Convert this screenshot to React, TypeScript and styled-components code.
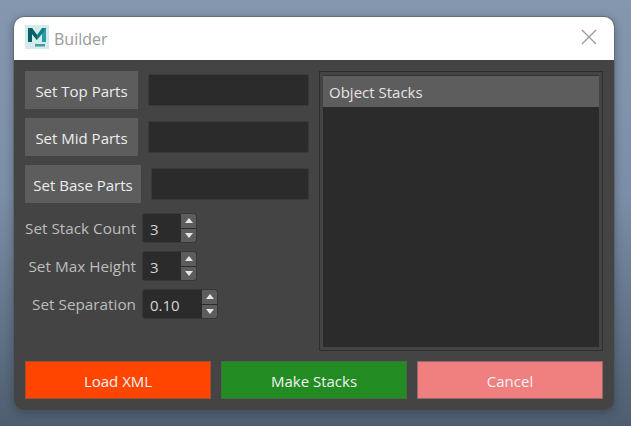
import React from 'react';
import styled, { createGlobalStyle } from 'styled-components';

const GlobalStyle = createGlobalStyle`
  html, body {
    margin: 0;
    height: 100%;
  }
  body {
    width: 631px;
    height: 426px;
    overflow: hidden;
    font-family: 'Open Sans', 'Noto Sans', 'Liberation Sans', sans-serif;
    background: linear-gradient(180deg, #8497af 0%, #7c8fa8 45%, #4e5d6f 100%);
  }
`;

const Desktop = styled.div`
  width: 631px;
  height: 426px;
  box-sizing: border-box;
  padding: 17px 17px 16px 14px;
`;

const Window = styled.div`
  width: 600px;
  height: 393px;
  box-sizing: border-box;
  display: flex;
  flex-direction: column;
  border-radius: 10px;
  overflow: hidden;
  box-shadow: 0 0 0 1px rgba(85, 85, 85, 0.45), 0 2px 10px rgba(30, 38, 50, 0.45);
`;

const TitleBar = styled.div`
  height: 43px;
  flex: none;
  box-sizing: border-box;
  background: #fff;
  display: flex;
  align-items: center;
  padding: 0 16px 3px 11px;
  gap: 5px;
`;

const TitleText = styled.span`
  font-size: 16px;
  color: #9a9a9a;
  flex: 1;
  margin-top: 3px;
`;

const CloseButton = styled.button`
  width: 18px;
  height: 18px;
  padding: 0;
  border: none;
  background: none;
  display: flex;
  color: #999;
`;

const Body = styled.div`
  flex: 1;
  background: #444;
  padding: 11px;
  display: flex;
  flex-direction: column;
  gap: 10px;
`;

const Columns = styled.div`
  display: flex;
  gap: 10px;
  height: 280px;
`;

const LeftColumn = styled.div`
  width: 284px;
  display: flex;
  flex-direction: column;
  gap: 9px;
`;

const PartRow = styled.div`
  display: flex;
  align-items: center;
  gap: 10px;
`;

const PartButton = styled.button`
  height: 38px;
  width: ${(props: { $w: number }) => props.$w}px;
  flex: none;
  padding: 2px 0 0;
  border: none;
  background: #5d5d5d;
  color: #eee;
  font: 15px 'Open Sans', sans-serif;
  white-space: nowrap;
`;

const PartField = styled.div`
  flex: 1;
  height: 32px;
  box-sizing: border-box;
  background: #2b2b2b;
  border: 1px solid #3a3a3a;
  border-radius: 2px;
`;

const SpinGroup = styled.div`
  display: flex;
  flex-direction: column;
  gap: 8px;
  margin-top: 1px;
`;

const SpinRow = styled.div`
  display: flex;
  align-items: center;
  height: 30px;
`;

const SpinLabel = styled.label`
  width: 111px;
  margin-right: 6px;
  text-align: right;
  font-size: 15.3px;
  color: #bdbdbd;
  white-space: nowrap;
`;

const SpinBox = styled.div`
  display: flex;
  height: 30px;
  box-sizing: border-box;
  background: #2b2b2b;
  border: 1px solid #383838;
  border-radius: 3px;
  overflow: hidden;
`;

const SpinValue = styled.span`
  width: ${(props: { $w: number }) => props.$w}px;
  box-sizing: border-box;
  padding-left: 7px;
  font-size: 15px;
  line-height: 30px;
  color: #d4d4d4;
`;

const SpinArrows = styled.div`
  width: 15px;
  display: flex;
  flex-direction: column;
  gap: 1px;
  background: #2b2b2b;
`;

const SpinArrow = styled.div`
  flex: 1;
  background: #5d5d5d;
  display: flex;
  align-items: center;
  justify-content: center;
`;

const StackPanel = styled.div`
  width: 284px;
  height: 280px;
  box-sizing: border-box;
  border: 1px solid #2e2e2e;
  padding: 3px;
  background: #444;
`;

const StackList = styled.div`
  height: 100%;
  box-sizing: border-box;
  border-top: 1px solid #333;
  background: #2b2b2b;
`;

const StackHeader = styled.div`
  height: 31px;
  background: #5d5d5d;
  color: #e4e4e4;
  font-size: 15px;
  line-height: 33px;
  padding-left: 6px;
`;

const ActionRow = styled.div`
  display: flex;
  gap: 10px;
`;

const ActionButton = styled.button`
  flex: 1;
  height: 38px;
  padding: 1px 0 0;
  box-sizing: border-box;
  border: 1px solid rgba(90, 90, 90, 0.6);
  background: ${(props: { $bg: string }) => props.$bg};
  color: #f2f2f2;
  font: 15px 'Open Sans', sans-serif;
`;

const MayaLogo = () => (
  <svg width="24" height="24" viewBox="0 0 24 24">
    <rect width="24" height="24" fill="#d3ebea" />
    <path d="M3 17V3h4l5 7 5-7h4v14h-4V9l-5 6-5-6v8z" fill="#12808a" />
    <path d="M3 3h4l5 7v5L7 9v8H3z" fill="#0a5f69" />
    <path d="M17 9l4-6v14h-4z" fill="#2a9aa3" />
    <rect x="10" y="19" width="10" height="2.5" fill="#4c9aa0" />
  </svg>
);

const CloseIcon = () => (
  <svg width="18" height="18" viewBox="0 0 18 18" fill="none" stroke="currentColor" strokeWidth="1.3">
    <path d="M2 2l14 14M16 2L2 16" />
  </svg>
);

const Arrow = ({ up }: { up?: boolean }) => (
  <svg width="8" height="5" viewBox="0 0 8 5" fill="#e6e6e6">
    <path d={up ? 'M0 5L4 0l4 5z' : 'M0 0l4 5 4-5z'} />
  </svg>
);

const parts = [
  { label: 'Set Top Parts', width: 113 },
  { label: 'Set Mid Parts', width: 113 },
  { label: 'Set Base Parts', width: 116 },
];

const spins = [
  { label: 'Set Stack Count', value: '3', width: 38 },
  { label: 'Set Max Height', value: '3', width: 38 },
  { label: 'Set Separation', value: '0.10', width: 59 },
];

const actions = [
  { label: 'Load XML', bg: '#ff4500' },
  { label: 'Make Stacks', bg: '#228b22' },
  { label: 'Cancel', bg: '#f08080' },
];

export default function App() {
  return (
    <Desktop>
      <GlobalStyle />
      <Window>
        <TitleBar>
          <MayaLogo />
          <TitleText>Builder</TitleText>
          <CloseButton>
            <CloseIcon />
          </CloseButton>
        </TitleBar>
        <Body>
          <Columns>
            <LeftColumn>
              {parts.map((part) => (
                <PartRow key={part.label}>
                  <PartButton $w={part.width}>{part.label}</PartButton>
                  <PartField />
                </PartRow>
              ))}
              <SpinGroup>
                {spins.map((spin) => (
                  <SpinRow key={spin.label}>
                    <SpinLabel>{spin.label}</SpinLabel>
                    <SpinBox>
                      <SpinValue $w={spin.width}>{spin.value}</SpinValue>
                      <SpinArrows>
                        <SpinArrow>
                          <Arrow up />
                        </SpinArrow>
                        <SpinArrow>
                          <Arrow />
                        </SpinArrow>
                      </SpinArrows>
                    </SpinBox>
                  </SpinRow>
                ))}
              </SpinGroup>
            </LeftColumn>
            <StackPanel>
              <StackList>
                <StackHeader>Object Stacks</StackHeader>
              </StackList>
            </StackPanel>
          </Columns>
          <ActionRow>
            {actions.map((action) => (
              <ActionButton key={action.label} $bg={action.bg}>
                {action.label}
              </ActionButton>
            ))}
          </ActionRow>
        </Body>
      </Window>
    </Desktop>
  );
}
